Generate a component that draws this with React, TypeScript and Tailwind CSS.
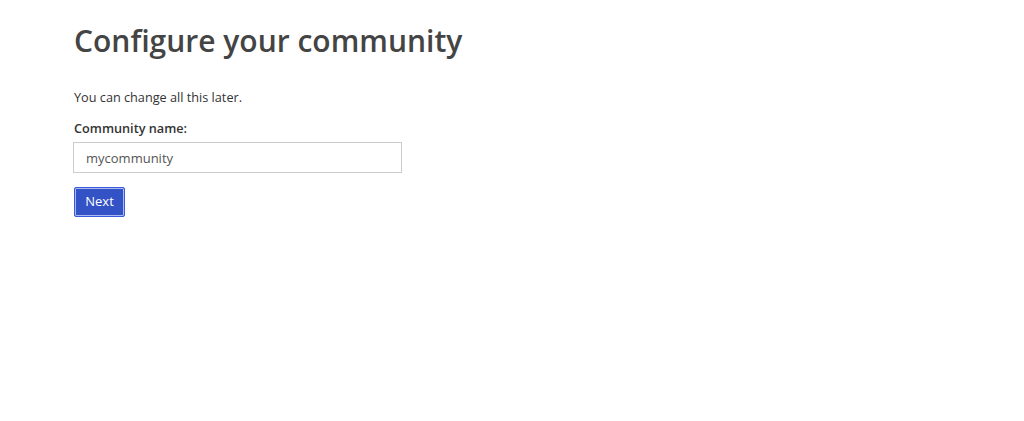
import React from "react";

export default function App() {
  return (
    <div className="min-h-[421px] w-full bg-white text-[#333]" style={{ fontFamily: '"Open Sans", sans-serif' }}>
      <div className="pl-[74px] pt-[21px]">
        <h1 className="text-[30px] font-semibold leading-[40px] text-[#444]">Configure your community</h1>
        <p className="mt-[27px] text-[12.7px] leading-[18px] text-[#333]">You can change all this later.</p>
        <label className="mt-[13px] block text-[12.7px] font-semibold leading-[18px] text-[#333]">Community name:</label>
        <input
          className="mt-[5px] -ml-px block h-[31px] w-[329px] border border-[#ccc] px-[12px] text-[13px] text-[#555] outline-none"
          defaultValue="mycommunity"
          style={{ fontFamily: '"Open Sans", sans-serif' }}
        />
        <button className="mt-[14px] flex h-[30px] w-[51px] items-center justify-center rounded-[2px] border border-[#3a5bd9] bg-[#3352c6] text-[13px] text-white shadow-[inset_0_0_0_1px_#a9baf5]">
          Next
        </button>
      </div>
    </div>
  );
}
